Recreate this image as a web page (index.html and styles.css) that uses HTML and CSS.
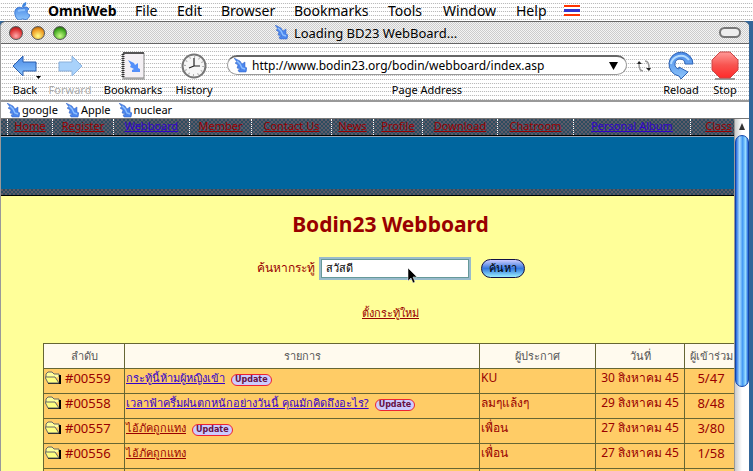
FILE: index.html
```html
<!DOCTYPE html>
<html lang="th">
<head>
  <meta charset="UTF-8">
  <title>Bodin23 Webboard</title>
  <meta name="viewport" content="width=device-width, initial-scale=1.0">
  <link rel="stylesheet" href="styles.css">
</head>
<body>

<svg width="0" height="0" class="defs">
  <defs>
    <linearGradient id="aqua" x1="0" y1="0" x2="0" y2="1">
      <stop offset="0" stop-color="#4a8ae8"/>
      <stop offset="1" stop-color="#8cc4fa"/>
    </linearGradient>
    <linearGradient id="red" x1="0" y1="0" x2="0" y2="1">
      <stop offset="0" stop-color="#ff9a98"/>
      <stop offset="0.5" stop-color="#f85450"/>
      <stop offset="1" stop-color="#ff2a2a"/>
    </linearGradient>
    <symbol id="swoosh" viewBox="0 0 13 15">
      <path d="M0 0L6 3L8 6L11 4L11 9L13 10L12 14L5 14L4 12L7 11L3 10L4 7L1 5L3 4Z" fill="#4c86ee" stroke="#2c5fc0" stroke-width=".5"/>
      <path d="M3 3L6 6L8 10L11 11" fill="none" stroke="#8ec0ff" stroke-width="1.4"/>
    </symbol>
    <symbol id="folder" viewBox="0 0 17 14">
      <path d="M1 8V3L3 1H7L9 3H14V6" fill="#ffff99" stroke="#666" stroke-width="1"/>
      <path d="M15 4V12H3" fill="none" stroke="#000" stroke-width="2"/>
      <path d="M3 12L0 6H10L14 12Z" fill="#ffff80" stroke="#666" stroke-width="1"/>
    </symbol>
  </defs>
</svg>

<nav class="menubar">
  <svg class="apple" viewBox="0 0 16 18">
    <path d="M8 5C8 2 10 1 12 0C13 3 11 5 8 5Z" fill="#3f86e0"/>
    <path d="M8 6C10 5 13 4 15 7C12 9 13 12 16 13C14 18 12 18 9 17C7 17 5 19 3 17C0 13 0 8 3 6C5 5 6 5 8 6Z" fill="url(#aqua)" stroke="#2a68c8" stroke-width=".8"/>
    <path d="M4 9C6 8 9 8 11 8" stroke="#8cc0fa" stroke-width="2" fill="none"/>
  </svg>
  <b>OmniWeb</b><span>File</span><span>Edit</span><span>Browser</span><span>Bookmarks</span><span>Tools</span><span>Window</span><span>Help</span>
  <i class="flag"></i>
</nav>

<div class="desktop">
<div class="window">
  <div class="titlebar">
    <div class="lights"><i class="light close"></i><i class="light mini"></i><i class="light grow"></i></div>
    <div class="title"><svg class="page-icon"><use href="#swoosh"/></svg>Loading BD23 WebBoard...</div>
    <i class="pill"></i>
  </div>

  <div class="toolbar">
    <button class="tool">
      <svg viewBox="0 0 28 28"><path d="M2 14L12 4V10H25V19H12V24Z" fill="url(#aqua)" stroke="#2b5fae"/><path d="M5 26H22" stroke="#bbb" stroke-dasharray="1 1"/><path d="M25 24h5l-2.500 3Z"/></svg>
      Back
    </button>
    <button class="tool off">
      <svg viewBox="0 0 28 28"><path d="M26 14L16 4V10H3V19H16V24Z" fill="#a9d2fb" stroke="#8ab0dc"/></svg>
      Forward
    </button>
    <button class="tool">
      <svg viewBox="0 0 28 28"><path d="M4 1H25V26H4Z" fill="#f4f0f4" stroke="#888"/><path d="M4 1H25" stroke="#555" stroke-width="2"/><path d="M4 2V26" stroke="#333" stroke-width="3" stroke-dasharray="1 1"/><path d="M9 8L15 11L16 13L19 11V16L21 17V20H13V18L15 17L11 15L12 13Z" fill="#5590fa"/><path d="M3 27H26" stroke="#888"/></svg>
      Bookmarks
    </button>
    <button class="tool">
      <svg viewBox="0 0 28 28"><circle cx="14" cy="14" r="11.500" fill="#f6f6f6" stroke="#777" stroke-width="2"/><circle cx="14" cy="14" r="9" fill="none" stroke="#aaa" stroke-dasharray="1 3.700" stroke-width="2"/><path d="M14 6V14H20M14 14L9 16" fill="none" stroke="#222" stroke-width="1.200"/></svg>
      History
    </button>
    <div class="address">
      <div class="field"><svg class="page-icon"><use href="#swoosh"/></svg>
        <input type="text" id="url" value="http://www.bodin23.org/bodin/webboard/index.asp">
        <svg class="arrow" viewBox="0 0 9 8"><path d="M0 0H9L4.500 8Z"/></svg>
      </div>
      <label for="url">Page Address</label>
    </div>
    <svg class="sync" viewBox="0 0 14 12"><path d="M6 11C3 11 2 9 2 4M8 1C11 1 12 3 12 8" fill="none" stroke="#999" stroke-width="1.500"/><path d="M0 4L2 1L5 4ZM9 8L12 11L14 8Z" fill="#222"/></svg>
    <button class="tool">
      <svg viewBox="0 0 28 28"><path d="M26 12A12 12 0 1 0 12 24L14 27L21 20L12 15V17A5 5 0 1 1 18 12Z" fill="url(#aqua)" stroke="#2d62b4"/><path d="M4 12A10 10 0 0 1 22 8" fill="none" stroke="#b4dcff" stroke-width="2"/></svg>
      Reload
    </button>
    <button class="tool">
      <svg viewBox="0 0 28 28"><path d="M4 27H24" stroke="#999" stroke-width="2"/><path d="M9 0H19L27 8V18L19 26H9L1 18V8Z" fill="url(#red)" stroke="#c44"/></svg>
      Stop
    </button>
  </div>

  <div class="favorites">
    <a href="#"><svg class="page-icon"><use href="#swoosh"/></svg>google</a>
    <a href="#"><svg class="page-icon"><use href="#swoosh"/></svg>Apple</a>
    <a href="#"><svg class="page-icon"><use href="#swoosh"/></svg>nuclear</a>
  </div>

  <div class="view">
    <div class="page">
      <nav class="site-nav">
        <span></span><a href="#">Home</a><a href="#">Register</a><a href="#" class="new">Webboard</a><a href="#">Member</a><a href="#">Contact Us</a><a href="#">News</a><a href="#">Profile</a><a href="#">Download</a><a href="#">Chatroom</a><a href="#" class="new">Personal Album</a><a href="#">Class</a>
      </nav>
      <div class="banner"></div>
      <div class="strip"></div>

      <main class="board">
        <h1>Bodin23 Webboard</h1>
        <form class="search">
          <label for="q">ค้นหากระทู้</label>
          <span class="search-box"><input type="text" id="q" value="สวัสดี">
            <svg class="pointer" viewBox="0 0 10 16"><path d="M1 0V13L4 10L6 15L8 14L6 9H10Z" stroke="#fff" stroke-width=".5"/></svg>
          </span>
          <button type="button">ค้นหา</button>
        </form>
        <a href="#" class="post">ตั้งกระทู้ใหม่</a>

        <table>
          <colgroup><col class="c-no"><col><col class="c-by"><col class="c-date"><col class="c-hits"></colgroup>
          <thead>
            <tr><th>ลำดับ</th><th>รายการ</th><th>ผู้ประกาศ</th><th>วันที่</th><th>ผู้เข้าร่วม</th></tr>
          </thead>
          <tbody>
            <tr><td class="no"><svg class="folder"><use href="#folder"/></svg>#00559</td><td><a href="#" class="new">กระทู้นี้ห้ามผู้หญิงเข้า</a><span class="update">Update</span></td><td>KU</td><td class="date">30 สิงหาคม 45</td><td class="hits">5/47</td></tr>
            <tr><td class="no"><svg class="folder"><use href="#folder"/></svg>#00558</td><td><a href="#" class="new">เวลาฟ้าครึ้มฝนตกหนักอย่างวันนี้ คุณมักคิดถึงอะไร?</a><span class="update">Update</span></td><td>ลมๆแล้งๆ</td><td class="date">29 สิงหาคม 45</td><td class="hits">8/48</td></tr>
            <tr><td class="no"><svg class="folder"><use href="#folder"/></svg>#00557</td><td><a href="#">ไอ้ภัคถูกแทง</a><span class="update">Update</span></td><td>เพื่อน</td><td class="date">27 สิงหาคม 45</td><td class="hits">3/80</td></tr>
            <tr><td class="no"><svg class="folder"><use href="#folder"/></svg>#00556</td><td><a href="#">ไอ้ภัคถูกแทง</a></td><td>เพื่อน</td><td class="date">27 สิงหาคม 45</td><td class="hits">1/58</td></tr>
            <tr><td class="no"></td><td></td><td></td><td></td><td></td></tr>
          </tbody>
        </table>
      </main>
    </div>
    <div class="scrollbar">
      <svg viewBox="0 0 14 16"><path d="M7 4L10 11H4Z" fill="#333"/></svg>
      <i class="thumb"></i>
    </div>
  </div>
</div>
</div>

</body>
</html>
```

FILE: styles.css
```css
* { box-sizing: border-box; }
html, body { height: 100%; }
body { margin: 0; display: flex; flex-direction: column; overflow: hidden; font-family: "Noto Sans", "Open Sans", sans-serif; font-size: 11px; color: #000; background: #fff; }
a { color: #990000; }
button { font-family: inherit; cursor: pointer; }
.new { color: #3300cc; }
.defs { position: absolute; }

.menubar, .toolbar, .titlebar { background-image: repeating-linear-gradient(90deg, rgba(255,255,255,0.9) 0 1px, transparent 1px 2px), repeating-linear-gradient(#fff 0 3px, #bbb 3px 4px); }
.menubar { flex: none; height: 21px; display: grid; grid-template-columns: 34px 87px 42px 44px 73px 94px 55px 73px 48px 16px; align-items: center; padding-left: 14px; font-size: 14px; line-height: 20px; }
.apple { width: 16px; height: 18px; }
.flag { height: 11px; background: linear-gradient(#f30 0 2px, #fff 2px 4px, #33c 4px 7px, #fff 7px 9px, #f30 9px); }

.desktop { flex: 1; min-height: 0; padding-right: 4px; background: #336699; }
.window { height: 100%; display: flex; flex-direction: column; border-top: 1px solid #666; border-left: 1px solid #999; border-radius: 6px 6px 0 0; background: #fff; overflow: hidden; }

.titlebar { flex: none; height: 22px; display: grid; grid-template-columns: 80px 1fr 98px; align-items: center; padding: 0 8px; border-bottom: 1px solid #666; background-image: repeating-conic-gradient(#ccc 0 25%, #f4f4f4 0 50%); background-size: 2px 2px; font-size: 13px; }
.lights { display: flex; gap: 8px; }
.light { width: 14px; height: 14px; border-radius: 50%; border: 1px solid #555; }
.close { background: radial-gradient(circle at 50% 75%, #ffaaaa, #dd3333 60%, #771111); }
.mini { background: radial-gradient(circle at 50% 75%, #ffff88, #ee9922 60%, #884400); }
.grow { background: radial-gradient(circle at 50% 75%, #ccff88, #44aa22 60%, #114400); }
.title { display: flex; justify-content: center; align-items: center; gap: 6px; }
.page-icon { width: 13px; height: 15px; flex: none; }
.pill { justify-self: end; width: 22px; height: 11px; border: 2px solid #777; border-radius: 6px; background: #eee; }

.toolbar { flex: none; height: 58px; display: grid; grid-template-columns: 48px 42px 84px 38px 1fr 34px 40px 48px; padding-top: 8px; border-bottom: 2px solid #999; }
.tool { display: flex; flex-direction: column; align-items: center; gap: 2px; padding: 0; border: 0; background: none; font-size: 11px; line-height: 16px; white-space: nowrap; }
.tool svg { width: 28px; height: 28px; overflow: visible; flex: none; }
.off { color: #aaa; }
.address { display: flex; flex-direction: column; align-items: center; gap: 7px; padding: 3px 0 0 14px; line-height: 16px; }
.field { width: 100%; height: 20px; display: flex; align-items: center; gap: 5px; padding: 0 8px 0 6px; border: 1px solid #999; border-top: 2px solid #666; border-radius: 10px; background: #fff; }
.field input { flex: 1; min-width: 0; padding: 0; border: 0; outline: 0; font: 12px "Noto Sans", sans-serif; }
.arrow { width: 9px; height: 8px; }
.sync { width: 14px; height: 12px; margin-top: 8px; justify-self: center; }

.favorites { flex: none; height: 17px; display: flex; align-items: center; gap: 8px; padding-left: 6px; line-height: 16px; border-bottom: 1px solid #777; }
.favorites a { display: flex; align-items: center; gap: 2px; color: #000; text-decoration: none; }

.view { flex: 1; min-height: 0; display: flex; }
.page { flex: 1; min-width: 0; overflow: hidden; background: #ffff99; }
.site-nav, .strip { background: repeating-conic-gradient(#2c4c60 0 25%, #5c5a68 0 50%) 0 0 / 4px 4px; border-bottom: 1px solid #000; }
.site-nav { height: 17px; display: grid; grid-template-columns: 6px 45px 61px 76px 62px 80px 42px 49px 75px 76px 117px 56px; line-height: 14px; text-align: center; }
.site-nav a { border-left: 1px dotted #fff; white-space: nowrap; }
.banner { height: 53px; border-top: 1px solid #99aabb; background: #00669f; }
.strip { height: 7px; }

.board { width: calc(100% + 46px); padding: 14px 42px 0; display: flex; flex-direction: column; align-items: center; color: #990000; }
h1 { margin: 0; font-size: 21px; line-height: 28px; }
.search { display: flex; align-items: center; gap: 6px; margin-top: 20px; font-size: 12px; line-height: 20px; }
.search-box { position: relative; display: flex; }
.search input { width: 148px; height: 19px; padding: 0 4px; border: 1px solid #669999; outline: 2px solid #99bbcc; font: 11px "Noto Sans", sans-serif; }
.pointer { position: absolute; left: 86px; top: 9px; width: 10px; height: 16px; }
.search button { width: 44px; height: 19px; margin-left: 6px; padding: 0; border: 1px solid #114; border-radius: 10px; background: linear-gradient(#ccccff, #3377dd 50%, #99eeff); font-size: 11px; line-height: 16px; }
.post { margin: 25px 0 20px; font-size: 11px; line-height: 20px; }

table { width: 100%; table-layout: fixed; border-collapse: collapse; font-size: 12px; }
.c-no { width: 81px; }
.c-by { width: 116px; }
.c-date { width: 89px; }
.c-hits { width: 53px; }
th, td { height: 25px; padding: 0 1px; border: 1px solid #666633; line-height: 18px; white-space: nowrap; }
th { background: #fffaee; color: #555; font-weight: normal; font-size: 11px; }
td { background: #ffcc66; vertical-align: top; }
td a { font-size: 11px; }
.folder { width: 17px; height: 14px; margin-right: 3px; vertical-align: -2px; }
.no { font-size: 13px; }
.date, .hits { text-align: center; }
.hits { font-size: 13px; }
.update { display: inline-block; margin-left: 6px; padding: 0 3px; border: 1px solid #ee2233; border-radius: 6px; background: #ccccff; color: #661144; font: bold 8px/10px "DejaVu Sans", sans-serif; }

.scrollbar { flex: none; width: 15px; display: flex; flex-direction: column; border-left: 1px solid #999; background: linear-gradient(90deg, #ccc, #fff 50%); }
.scrollbar svg { width: 14px; height: 16px; }
.thumb { height: 252px; border: 1px solid #1144aa; border-radius: 7px; background: linear-gradient(90deg, #2266dd, #aaddff 30%, #4499f4 55%, #99ddff 80%, #2266dd); }
```
